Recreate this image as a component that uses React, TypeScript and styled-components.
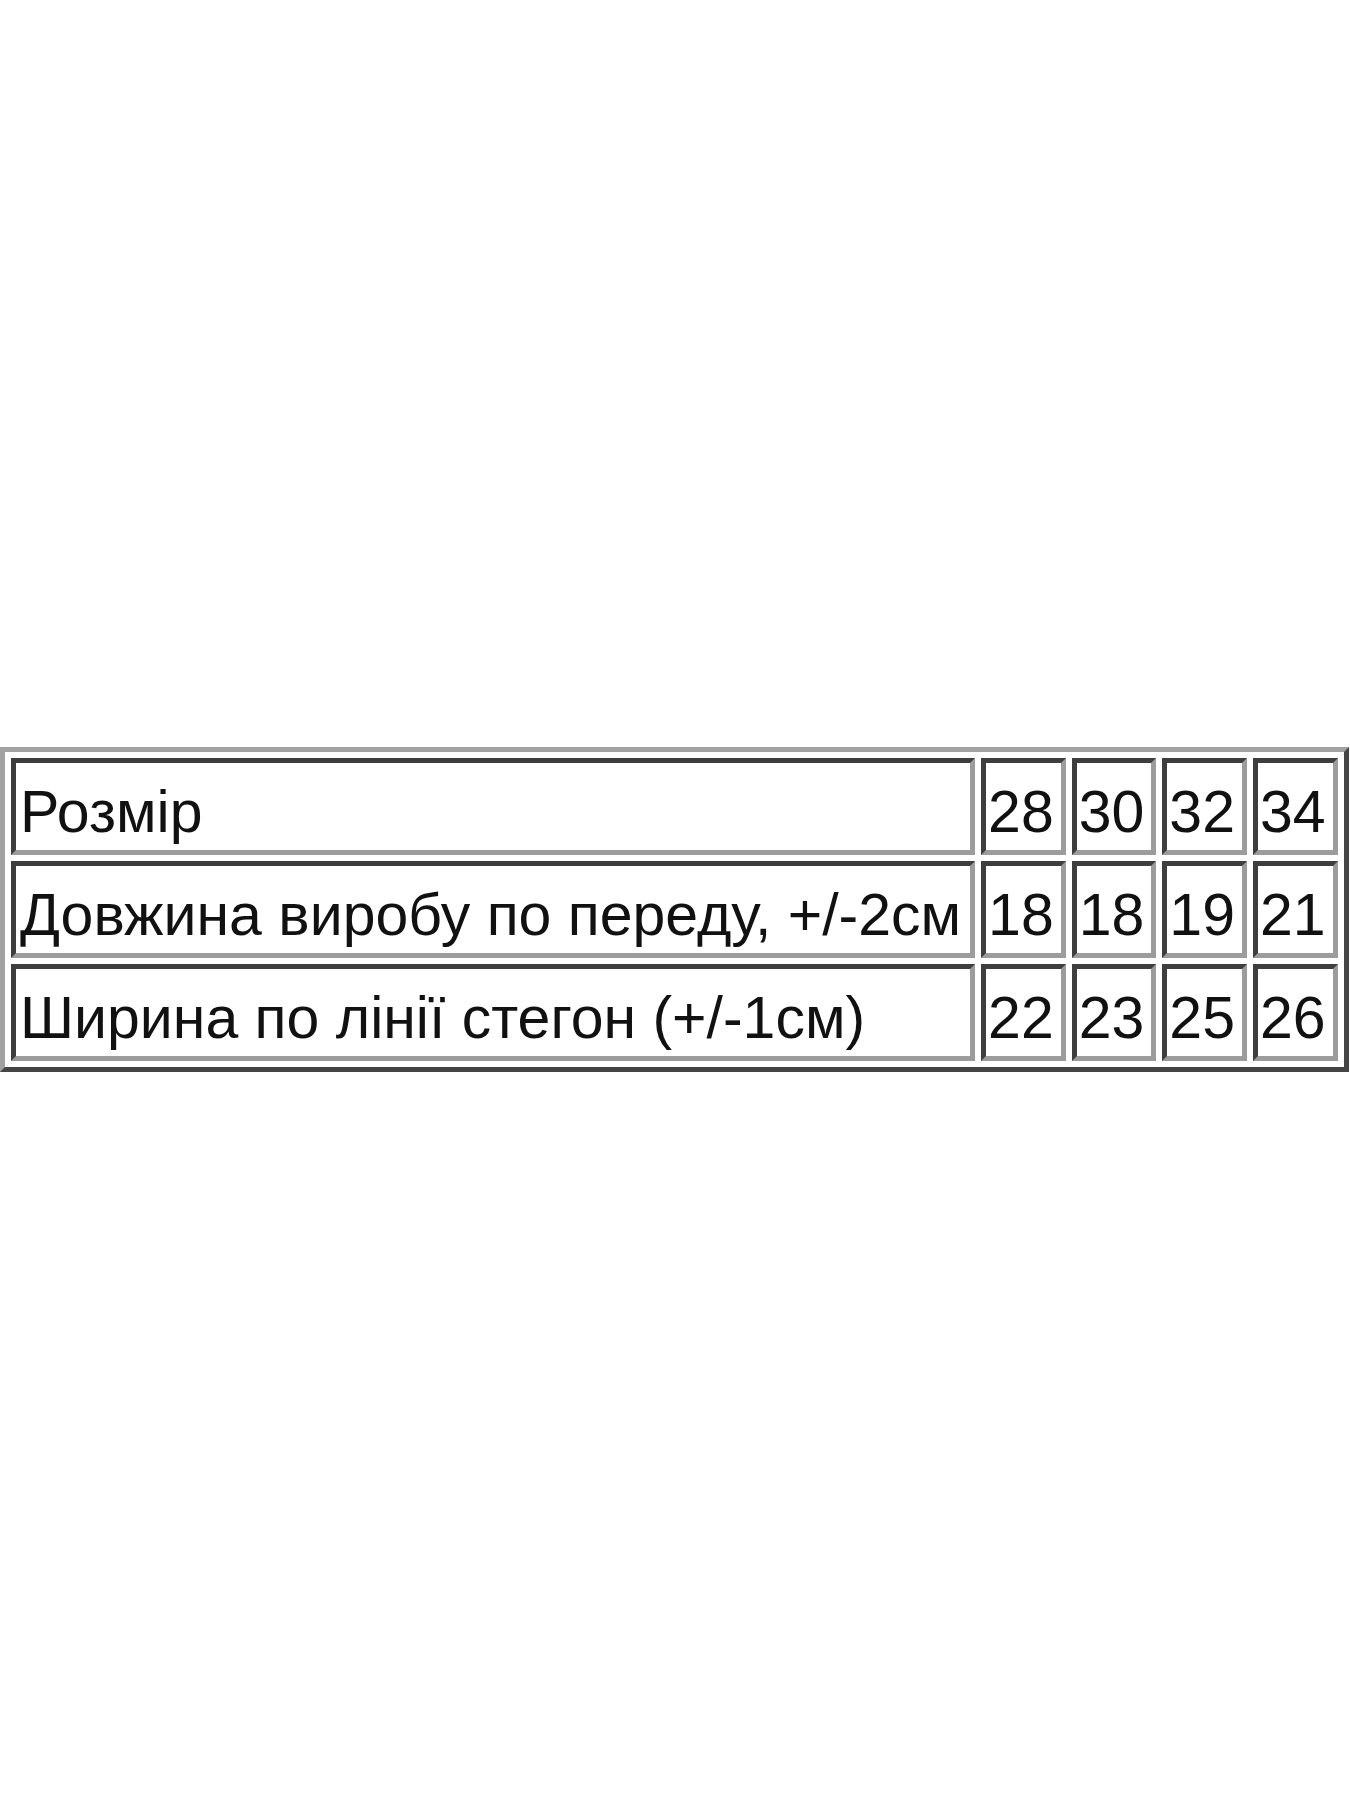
import styled, { createGlobalStyle } from "styled-components";

const GlobalStyle = createGlobalStyle`
  html, body {
    margin: 0;
    padding: 0;
    background: #ffffff;
  }
`;

const Page = styled.div`
  width: 1350px;
  min-height: 1800px;
  box-sizing: border-box;
  padding-top: 747px;
  background: #fff;
`;

const SizeTable = styled.table`
  border-collapse: separate;
  border-spacing: 6px;
  border-width: 5px;
  border-style: solid;
  border-color: #a2a2a2 #454545 #454545 #a2a2a2;
  font-family: "Liberation Sans", Arial, sans-serif;
  font-size: 59px;
  color: #111;
`;

// inset cell, label column gets a bit more room on the right
const Cell = styled.td<{ $label?: boolean }>`
  height: 75px;
  padding: ${(p) => (p.$label ? "12px 9px 0 4px" : "12px 7px 0 2px")};
  border-width: 5px;
  border-style: solid;
  border-color: #3e3e3e #9c9c9c #9c9c9c #3e3e3e;
  white-space: nowrap;
  vertical-align: middle;
  text-align: left;
  line-height: 1.15;
`;

interface SizeRow {
  label: string;
  values: string[];
}

const rows: SizeRow[] = [
  { label: "Розмір", values: ["28", "30", "32", "34"] },
  { label: "Довжина виробу по переду, +/-2см", values: ["18", "18", "19", "21"] },
  { label: "Ширина по лінії стегон (+/-1см)", values: ["22", "23", "25", "26"] },
];

export default function App() {
  return (
    <Page>
      <GlobalStyle />
      <SizeTable>
        <tbody>
          {rows.map((row) => (
            <tr key={row.label}>
              <Cell $label>{row.label}</Cell>
              {row.values.map((v, i) => (
                <Cell key={i}>{v}</Cell>
              ))}
            </tr>
          ))}
        </tbody>
      </SizeTable>
    </Page>
  );
}
